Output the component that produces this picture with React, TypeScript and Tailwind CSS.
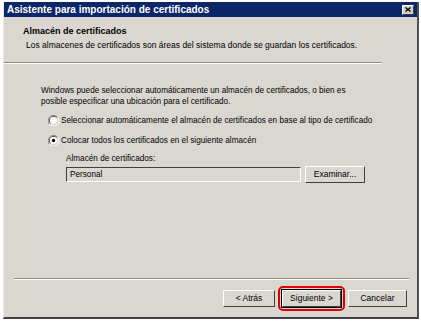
import React from 'react';

const font = { fontFamily: '"Liberation Sans", Arial, sans-serif' };

const Radio = ({ checked }: { checked?: boolean }) => (
  <svg width="11" height="11" viewBox="0 0 12 12" className="shrink-0">
    <path d="M10.5 2.5 A5.5 5.5 0 0 0 1.5 10" fill="none" stroke="#808080" strokeWidth="1" />
    <path d="M9.5 3.2 A4.2 4.2 0 0 0 2.6 9" fill="none" stroke="#404040" strokeWidth="1" />
    <path d="M1.5 10 A5.5 5.5 0 0 0 10.5 2.5" fill="none" stroke="#ffffff" strokeWidth="1" />
    <circle cx="6" cy="6" r="3.8" fill="#ffffff" />
    {checked && <circle cx="6" cy="6" r="1.8" fill="#000000" />}
  </svg>
);

const Btn = ({ label, def }: { label: string; def?: boolean }) => (
  <div
    className={
      'flex h-[17px] items-center justify-center border-t border-l border-t-white border-l-white border-r border-b border-r-[#404040] border-b-[#404040] bg-[#dad7d0] text-[8.5px] text-black ' +
      (def ? 'outline outline-1 outline-black' : '')
    }
  >
    {label}
  </div>
);

export default function App() {
  return (
    <div className="h-[322px] w-[421px] bg-white pl-[3px] pt-[2px]" style={font}>
      <div className="flex h-[317px] w-[416px] flex-col border-l border-l-[#f0e8e0] border-r-2 border-r-[#505050] border-b-2 border-b-[#404040] bg-[#dad7d0]">
        {/* title bar */}
        <div className="flex h-[15px] items-center justify-between bg-[#0c2669] pl-[3px] pr-[3px]">
          <span className="text-[10px] font-bold leading-none text-white">Asistente para importación de certificados</span>
          <div className="flex h-[10px] w-[12px] items-center justify-center border-t border-l border-t-white border-l-white border-r border-b border-r-[#404040] border-b-[#404040] bg-[#d4d0c8]">
            <svg width="6" height="5" viewBox="0 0 6 5">
              <path d="M0.5 0.5 L5.5 4.5 M5.5 0.5 L0.5 4.5" stroke="#000" strokeWidth="1.3" />
            </svg>
          </div>
        </div>

        {/* header */}
        <div className="flex h-[45px] flex-col pl-[19px] pt-[9px]">
          <span className="text-[9px] font-bold leading-[11px] text-black">Almacén de certificados</span>
          <span className="mt-[3px] pl-[3px] text-[8.5px] leading-[11px] text-black">
            Los almacenes de certificados son áreas del sistema donde se guardan los certificados.
          </span>
        </div>
        <div className="h-px w-[377px] bg-[#8a8884]" />
        <div className="h-px w-[377px] bg-white" />

        {/* body */}
        <div className="flex flex-1 flex-col pl-[37px] pt-[21px] text-[8.2px] leading-[11px] text-black">
          <p>
            Windows puede seleccionar automáticamente un almacén de certificados, o bien es
            <br />
            posible especificar una ubicación para el certificado.
          </p>
          <div className="mt-[8px] flex items-center gap-[2px] pl-[7px]">
            <Radio />
            <span>Seleccionar automáticamente el almacén de certificados en base al tipo de certificado</span>
          </div>
          <div className="mt-[9px] flex items-center gap-[2px] pl-[7px]">
            <Radio checked />
            <span>Colocar todos los certificados en el siguiente almacén</span>
          </div>
          <div className="mt-[7px] pl-[25px]">Almacén de certificados:</div>
          <div className="mt-[2px] flex items-center pl-[25px]">
            <div className="flex h-[15px] w-[235px] items-center border-t border-l border-t-[#404040] border-l-[#404040] border-r border-b border-r-white border-b-white pl-[3px]">
              Personal
            </div>
            <div className="ml-[4px] w-[60px]">
              <Btn label="Examinar..." />
            </div>
          </div>
        </div>

        {/* footer */}
        <div className="ml-[10px] h-px w-[395px] bg-[#8a8884]" />
        <div className="ml-[10px] h-px w-[395px] bg-white" />
        <div className="flex items-center pb-[6px] pl-[219px] pt-[6px]">
          <div className="w-[52px]">
            <Btn label="< Atrás" />
          </div>
          <div className="ml-[3px] rounded-[5px] border-[2.5px] border-[#e00000] p-[2px]">
            <div className="w-[59px]">
              <Btn label="Siguiente >" def />
            </div>
          </div>
          <div className="ml-[3px] w-[59px]">
            <Btn label="Cancelar" />
          </div>
        </div>
      </div>
    </div>
  );
}
